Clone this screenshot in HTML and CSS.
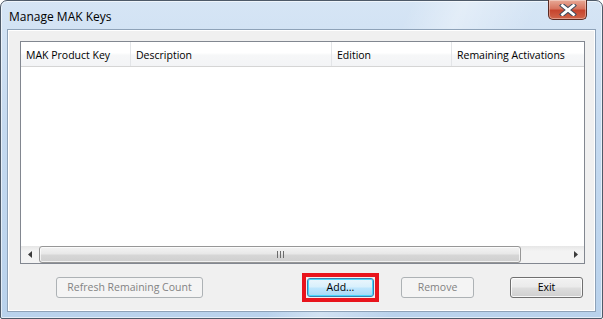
FILE: index.html
```html
<!DOCTYPE html>
<html>
<head>
<meta charset="utf-8">
<link rel="stylesheet" href="styles.css">
</head>
<body>
<div class="window">
  <div class="titlebar">
    <span class="title">Manage MAK Keys</span>
    <button class="close" aria-label="Close">
      <svg width="18" height="12" viewBox="0 0 18 12">
        <path d="M3.5 1.5 L14.5 10.5 M14.5 1.5 L3.5 10.5" stroke="#3c4a5c" stroke-width="4.8" stroke-linecap="square"/>
        <path d="M3.5 1.5 L14.5 10.5 M14.5 1.5 L3.5 10.5" stroke="#ffffff" stroke-width="2.8" stroke-linecap="square"/>
      </svg>
    </button>
  </div>
  <div class="client">
    <div class="listview">
      <div class="header">
        <div class="col c1">MAK Product Key</div>
        <div class="col c2">Description</div>
        <div class="col c3">Edition</div>
        <div class="col c4">Remaining Activations</div>
      </div>
      <div class="rows"></div>
      <div class="hscroll">
        <div class="arrow left"><svg width="4" height="7" viewBox="0 0 4 7"><path d="M4 0 L0 3.5 L4 7 Z" fill="#3b3b3b"/></svg></div>
        <div class="track">
          <div class="thumb">
            <svg width="7" height="7" viewBox="0 0 7 7"><path d="M0.5 0 V7 M3.5 0 V7 M6.5 0 V7" stroke="#6b6b6b" stroke-width="1"/></svg>
          </div>
        </div>
        <div class="arrow right"><svg width="4" height="7" viewBox="0 0 4 7"><path d="M0 0 L4 3.5 L0 7 Z" fill="#3b3b3b"/></svg></div>
      </div>
    </div>
    <div class="buttons">
      <button class="btn disabled refresh">Refresh Remaining Count</button>
      <div class="highlight"><button class="btn default add">Add...</button></div>
      <button class="btn disabled remove">Remove</button>
      <button class="btn exit">Exit</button>
    </div>
  </div>
</div>
</body>
</html>
```
FILE: styles.css
```css
* { box-sizing: border-box; }
html, body { margin: 0; padding: 0; }
body {
  width: 603px;
  height: 319px;
  overflow: hidden;
  background: #ffffff;
  font-family: "Open Sans", "Noto Sans", sans-serif;
  font-size: 10.5px;
  color: #000;
}
.window {
  width: 603px;
  height: 319px;
  border: 1px solid #4e5a69;
  border-radius: 7px 7px 2px 2px;
  background:
    linear-gradient(115deg, rgba(255,255,255,0) 0%, rgba(255,255,255,0) 55%, rgba(255,255,255,0.35) 62%, rgba(255,255,255,0) 72%),
    linear-gradient(180deg, #d6e5f5 0%, #c5daf0 40%, #b9d2ec 100%);
  box-shadow: inset 0 0 0 1px rgba(255,255,255,0.6);
  display: flex;
  flex-direction: column;
}
.titlebar {
  height: 28px;
  display: flex;
  justify-content: space-between;
  align-items: flex-start;
  padding-left: 8px;
  padding-right: 15px;
}
.title {
  font-family: "Open Sans", "Noto Sans", sans-serif;
  font-size: 12px;
  line-height: 12px;
  margin-top: 10px;
  color: #000;
}
.close {
  width: 39px;
  height: 20px;
  margin-top: -1px;
  padding: 0;
  border: 1px solid #5a2a22;
  border-top: none;
  border-radius: 0 0 5px 5px;
  background: linear-gradient(180deg, #e8a996 0%, #d77560 45%, #c7452e 55%, #d0654a 100%);
  box-shadow: inset 0 0 0 1px rgba(255,255,255,0.35);
  display: flex;
  align-items: center;
  justify-content: center;
}
.client {
  flex: 1;
  margin: 0 6px 6px 6px;
  border: 1px solid #8ea2b8;
  box-shadow: 0 0 0 1px #ffffff inset;
  background: #f0f0f0;
  padding: 11px 10px 0 12px;
  display: flex;
  flex-direction: column;
}
.listview {
  height: 223px;
  border: 1px solid #828790;
  background: #fff;
  display: flex;
  flex-direction: column;
}
.header {
  height: 25px;
  display: flex;
  background: linear-gradient(180deg, #ffffff 0%, #ffffff 45%, #f6f7f8 55%, #f3f4f6 100%);
  border-bottom: 1px solid #d5d5d5;
}
.col {
  padding-left: 5px;
  padding-top: 2px;
  line-height: 22px;
  border-right: 1px solid #e3e5e8;
  white-space: nowrap;
  overflow: hidden;
}
.c1 { width: 110px; }
.c2 { width: 201px; }
.c3 { width: 120px; }
.c4 { flex: 1; border-right: none; }
.rows { flex: 1; }
.hscroll {
  height: 17px;
  display: flex;
  background: linear-gradient(180deg, #e6e6e6 0%, #f3f3f3 30%, #f3f3f3 100%);
}
.arrow {
  width: 17px;
  display: flex;
  align-items: center;
  justify-content: center;
}
.track {
  flex: 1;
  padding: 0 0 0 1px;
  display: flex;
}
.thumb {
  width: 482px;
  height: 17px;
  border: 1px solid #979797;
  border-radius: 3px;
  background: linear-gradient(180deg, #f3f3f3 0%, #e8e8e8 45%, #d6d6d6 55%, #cfcfcf 100%);
  box-shadow: inset 0 0 0 1px rgba(255,255,255,0.7);
  display: flex;
  align-items: center;
  justify-content: center;
}
.buttons {
  display: flex;
  align-items: center;
  margin-top: 9px;
  padding-left: 36px;
}
.btn {
  height: 21px;
  padding: 0;
  font-family: "Open Sans", "Noto Sans", sans-serif;
  font-size: 10.5px;
  line-height: 19px;
  border: 1px solid #707070;
  border-radius: 3px;
  background: linear-gradient(180deg, #f2f2f2 0%, #ebebeb 45%, #dddddd 55%, #cfcfcf 100%);
  box-shadow: inset 0 0 0 1px rgba(255,255,255,0.8);
  color: #000;
}
.btn.disabled {
  border-color: #adb2b5;
  background: #f4f4f4;
  box-shadow: none;
  color: #838383;
}
.refresh { width: 147px; }
.highlight {
  margin-left: 99px;
  border: 4px solid #e8141c;
  padding: 1px;
  width: 77px;
  height: 29px;
  display: flex;
}
.add {
  width: 67px;
  height: 19px;
  line-height: 17px;
  border-color: #3c7fb1;
  background: linear-gradient(180deg, #eaf6fd 0%, #d9f0fc 45%, #bee6fd 55%, #a7d9f5 100%);
  box-shadow: inset 0 0 0 1px #48d8fb;
}
.remove { width: 73px; margin-left: 22px; }
.exit { width: 73px; margin-left: 36px; }
```
